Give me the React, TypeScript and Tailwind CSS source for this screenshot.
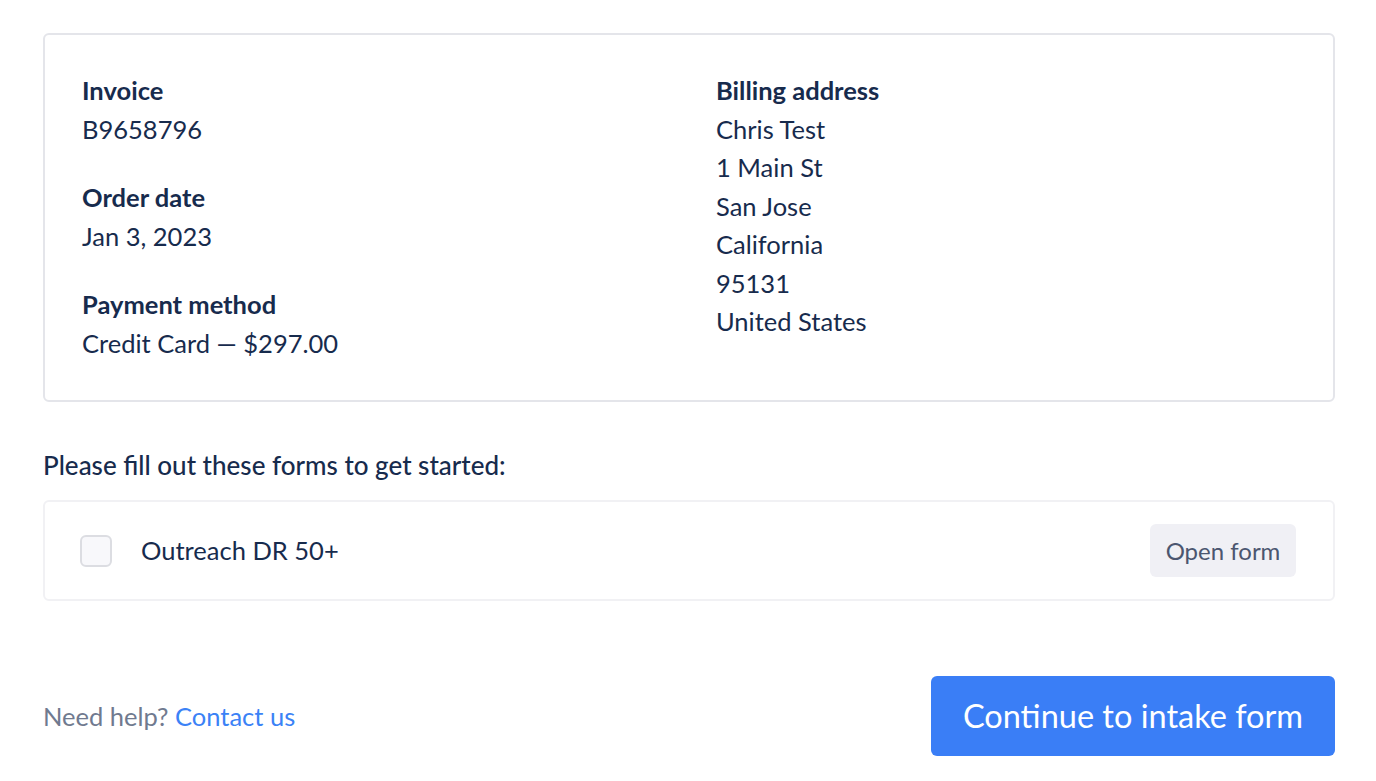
import React from 'react';

const navy = 'text-[#172b4d]';

function Field({ label, lines }: { label: string; lines: string[] }) {
  return (
    <div>
      <div className="font-bold">{label}</div>
      {lines.map((l) => (
        <div key={l}>{l}</div>
      ))}
    </div>
  );
}

export default function App() {
  return (
    <div
      className={`min-h-screen bg-white pl-[43px] pr-[41px] pt-[33px] pb-6 ${navy}`}
      style={{ fontFamily: 'Lato, "Open Sans", sans-serif' }}
    >
      <div className="rounded-md border-2 border-[#e4e5ea] pl-[37px] pr-[37px] pt-[36px] pb-[38px] text-[25.5px] leading-[38.5px]">
        <div className="grid grid-cols-[634px_1fr]">
          <div className="flex flex-col gap-[30px]">
            <Field label="Invoice" lines={['B9658796']} />
            <Field label="Order date" lines={['Jan 3, 2023']} />
            <Field label="Payment method" lines={['Credit Card — $297.00']} />
          </div>
          <Field
            label="Billing address"
            lines={['Chris Test', '1 Main St', 'San Jose', 'California', '95131', 'United States']}
          />
        </div>
      </div>

      <p className="mt-[45px] text-[26px] leading-[36px] font-medium">Please fill out these forms to get started:</p>

      <div className="mt-[17px] flex h-[101px] items-center rounded-md border-2 border-[#f1f1f4] pl-[35px] pr-[37px]">
        <span className="h-[32px] w-[32px] rounded-md border-2 border-[#dcdde2] bg-[#f8f8fb]" />
        <span className="ml-[29px] text-[25.5px]">Outreach DR 50+</span>
        <button className="ml-auto h-[53px] w-[146px] rounded-md bg-[#f0f0f5] text-[24px] text-[#4b5670]">
          Open form
        </button>
      </div>

      <div className="mt-[75px] flex items-center justify-between">
        <p className="text-[25.5px] text-[#707a8f]">
          Need help? <a className="text-[#3b82f6]">Contact us</a>
        </p>
        <button className="h-[80px] w-[404px] rounded-md bg-[#3a7ef6] text-[32.5px] text-white">
          Continue to intake form
        </button>
      </div>
    </div>
  );
}
